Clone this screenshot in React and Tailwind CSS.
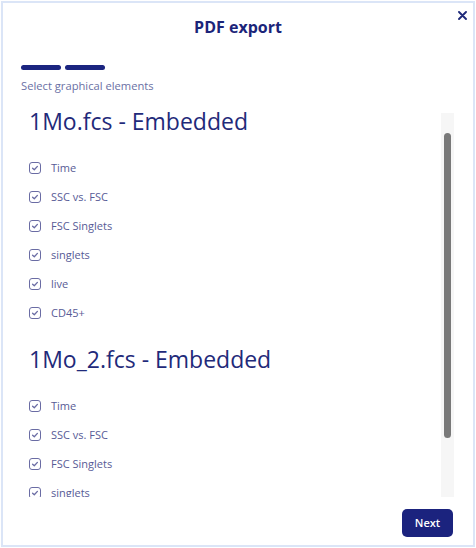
import React from "react";

const font = { fontFamily: '"Open Sans", "Noto Sans", sans-serif' };

function Check() {
  return (
    <span className="flex h-[12px] w-[12px] shrink-0 items-center justify-center rounded-[3px] border-[1.5px] border-[#6a6ca4]">
      <svg width="8" height="8" viewBox="0 0 8 8" fill="none">
        <path d="M1.6 4.2 L3.3 5.8 L6.4 2.4" stroke="#6a6ca4" strokeWidth="1.3" strokeLinecap="round" strokeLinejoin="round" />
      </svg>
    </span>
  );
}

function Item({ label }) {
  return (
    <div className="flex h-[29px] items-center gap-[10px]">
      <Check />
      <span className="text-[11px] leading-[16px] text-[#575b96]">{label}</span>
    </div>
  );
}

function Section({ title, items, first }) {
  return (
    <div className={first ? "" : "mt-[16px]"}>
      <div className="text-[23px] font-medium leading-[32px] text-[#1f2a7a]">{title}</div>
      <div className="mt-[16px]">
        {items.map((it) => (
          <Item key={it} label={it} />
        ))}
      </div>
    </div>
  );
}

export default function App() {
  const items = ["Time", "SSC vs. FSC", "FSC Singlets", "singlets", "live", "CD45+"];
  return (
    <div className="h-[548px] w-[476px] bg-white p-px" style={font}>
      <div className="relative flex h-full flex-col border-2 border-[#dbe5f7] bg-white">
        <button className="absolute right-[6px] top-[8px] flex h-[9px] w-[9px] items-center justify-center">
          <svg width="9" height="9" viewBox="0 0 9 9">
            <path d="M1 1 L8 8 M8 1 L1 8" stroke="#1f2a7a" strokeWidth="1.9" strokeLinecap="round" />
          </svg>
        </button>
        <div className="pt-[13px] text-center text-[16px] font-bold leading-[22px] text-[#1b2479]">PDF export</div>
        <div className="mt-[27px] flex gap-[4px] pl-[18px]">
          <div className="h-[5px] w-[40px] rounded-full bg-[#1b2580]" />
          <div className="h-[5px] w-[40px] rounded-full bg-[#1b2580]" />
        </div>
        <div className="mt-[8px] pl-[18px] text-[11.2px] leading-[16px] text-[#6a70a4]">Select graphical elements</div>
        <div className="mt-[11px] flex h-[392px]">
          <div className="flex-1 overflow-hidden pl-[26px]">
            <Section title="1Mo.fcs - Embedded" items={items} first />
            <Section title="1Mo_2.fcs - Embedded" items={items} />
          </div>
          <div className="mr-[19px] mt-[8px] w-[13px] bg-[#f6f6f6] pt-[20px]">
            <div className="mx-auto h-[305px] w-[7px] rounded-full bg-[#797979]" />
          </div>
        </div>
        <div className="flex justify-end pr-[20px] pt-[12px]">
          <button className="flex h-[28px] w-[51px] items-center justify-center rounded-[5px] bg-[#1b237e] text-[11px] font-semibold text-white">
            Next
          </button>
        </div>
      </div>
    </div>
  );
}
